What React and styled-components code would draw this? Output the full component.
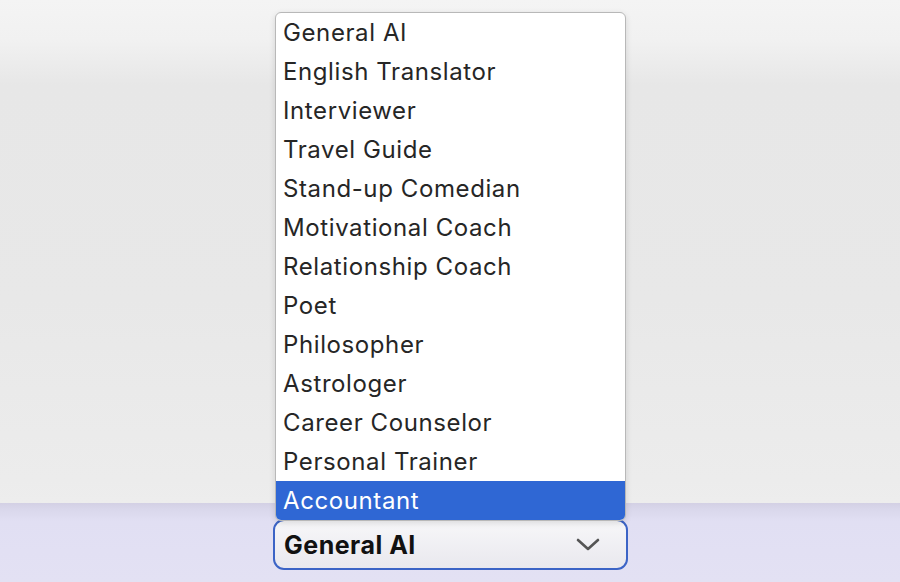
import React from 'react'
import styled, { createGlobalStyle } from 'styled-components';

const roles = [
    'General AI',
    'English Translator',
    'Interviewer',
    'Travel Guide',
    'Stand-up Comedian',
    'Motivational Coach',
    'Relationship Coach',
    'Poet',
    'Philosopher',
    'Astrologer',
    'Career Counselor',
    'Personal Trainer',
    'Accountant',
];

export default function App() {
    return (
        <>
            <GlobalStyle />
            <Page>
                <ChatArea />
                <Footer>
                    <SelectWrap>
                        <Menu>
                            {roles.map((role) => (
                                <Option key={role} active={role === 'Accountant'}>{role}</Option>
                            ))}
                        </Menu>
                        <SelectBox>
                            <span>General AI</span>
                            <svg width="24" height="14" viewBox="0 0 24 14">
                                <path d="M2 2 L12 11 L22 2" fill="none" stroke="#555" strokeWidth="2.6" strokeLinecap="round" strokeLinejoin="round" />
                            </svg>
                        </SelectBox>
                    </SelectWrap>
                </Footer>
            </Page>
        </>
    )
}

const GlobalStyle = createGlobalStyle`
body {
    margin: 0;
    font-family: Inter, "Noto Sans", sans-serif;
}
`;

const Page = styled.div`
display: flex;
flex-direction: column;
height: 582px;
width: 900px;
overflow: hidden;
`;

const ChatArea = styled.div`
flex: 1;
background: linear-gradient(to bottom, #f4f4f4 0px, #f1f1f1 40px, #e7e7e7 85px, #e8e8e8 300px, #ececec 480px, #ededed 100%);
`;

const Footer = styled.div`
height: 79px;
box-sizing: border-box;
padding-top: 16px;
display: flex;
justify-content: center;
background: linear-gradient(to bottom, #d3d0e4 0px, #d9d7eb 6px, #e1dff3 18px, #e3e1f3 100%);
`;

const SelectWrap = styled.div`
position: relative;
width: 355px;
height: 51px;
margin-left: 1px;
`;

const Menu = styled.ul`
position: absolute;
left: 2px;
right: 2px;
bottom: calc(100% - 2px);
margin: 0;
padding: 0;
list-style: none;
background: #fff;
border: 1px solid #b8b8b8;
border-radius: 6px;
overflow: hidden;
box-shadow: 0 2px 6px rgba(0, 0, 0, 0.12);
`;

const Option = styled.li`
height: 39px;
line-height: 39px;
padding-left: 7px;
font-size: 24px;
font-weight: 400;
letter-spacing: 0.6px;
color: ${(p) => (p.active ? '#fff' : '#262626')};
background: ${(p) => (p.active ? '#2f67d4' : 'transparent')};
`;

const SelectBox = styled.div`
box-sizing: border-box;
height: 51px;
display: flex;
align-items: center;
justify-content: space-between;
padding: 0 26px 0 9px;
border: 2px solid #3c64c6;
border-radius: 11px;
background: linear-gradient(to bottom, #f7f7f9, #e9e8ee);
font-size: 25px;
font-weight: 700;
letter-spacing: 0.5px;
color: #111;
`;
